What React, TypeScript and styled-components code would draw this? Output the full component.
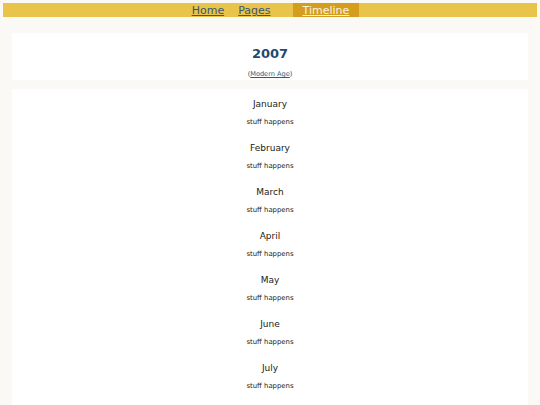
import { FC } from 'react';
import styled, { createGlobalStyle } from 'styled-components';

const months = ['January', 'February', 'March', 'April', 'May', 'June', 'July'];

const GlobalStyle = createGlobalStyle`
  html, body {
    margin: 0;
    padding: 0;
    background: #fbf9f6;
    font-family: "DejaVu Sans", Verdana, sans-serif;
    color: #1a1a1a;
  }
  body {
    padding: 3px;
  }
`;

const App: FC = () => {
  return (
    <>
      <GlobalStyle />
      <StyledNav>
        <StyledNavItem href="#">Home</StyledNavItem>
        <StyledNavItem href="#">Pages</StyledNavItem>
        <StyledNavItem href="#" $active>
          Timeline
        </StyledNavItem>
      </StyledNav>
      <StyledMain>
        <StyledHeader>
          <StyledYear>2007</StyledYear>
          <StyledEra>
            (<a href="#">Modern Age</a>)
          </StyledEra>
        </StyledHeader>
        <StyledList>
          {months.map((month) => (
            <StyledMonth key={month}>
              <StyledMonthName>{month}</StyledMonthName>
              <StyledEvent>stuff happens</StyledEvent>
            </StyledMonth>
          ))}
        </StyledList>
      </StyledMain>
    </>
  );
};

export default App;

const StyledNav = styled.nav`
  display: flex;
  justify-content: center;
  height: 14px;
  background: #e8c44a;
  padding-left: 4px;
`;

const StyledNavItem = styled.a<{ $active?: boolean }>`
  display: block;
  font-size: 11px;
  line-height: 15px;
  padding: ${(p) => (p.$active ? '0 10px' : '0 7px')};
  margin-left: ${(p) => (p.$active ? '15px' : '0')};
  background: ${(p) => (p.$active ? '#d49d1e' : 'transparent')};
  color: ${(p) => (p.$active ? '#fdf3dc' : '#3d566b')};
  text-decoration: underline;
`;

const StyledMain = styled.main`
  display: flex;
  flex-direction: column;
  gap: 9px;
  padding: 16px 9px 0;
`;

const StyledHeader = styled.section`
  background: #ffffff;
  text-align: center;
  height: 47px;
  display: flex;
  flex-direction: column;
  align-items: center;
`;

const StyledYear = styled.h1`
  margin: 13px 0 0;
  font-size: 13px;
  line-height: 16px;
  font-weight: bold;
  color: #1e4a6e;
`;

const StyledEra = styled.div`
  margin-top: 7px;
  font-size: 6.6px;
  line-height: 10px;
  color: #1e4a6e;

  a {
    color: #2c5a80;
  }
`;

const StyledList = styled.section`
  background: #ffffff;
  display: flex;
  flex-direction: column;
  align-items: center;
  padding: 9px 0 12px;
`;

const StyledMonth = styled.div`
  display: flex;
  flex-direction: column;
  align-items: center;
  height: 44px;
`;

const StyledMonthName = styled.h2`
  margin: 0;
  font-size: 9px;
  line-height: 12px;
  font-weight: normal;
`;

const StyledEvent = styled.p`
  margin: 7px 0 0;
  font-size: 6.9px;
  line-height: 10px;
`;
